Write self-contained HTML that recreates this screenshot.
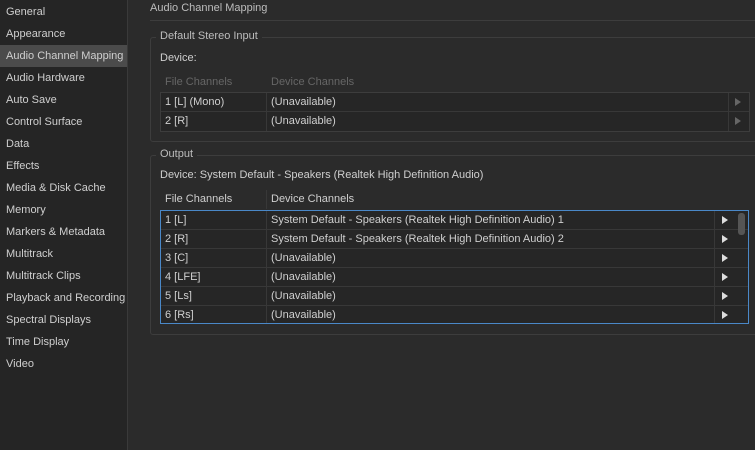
<!DOCTYPE html><html><head><style>
body{margin:0;width:755px;height:450px;background:#2b2b2b;font-family:"Liberation Sans",sans-serif;font-size:11px;color:#cfcfcf;position:relative;overflow:hidden}
.sb{position:absolute;left:0;top:0;width:128px;height:450px;background:#252525;border-right:1px solid #3a3a3a;padding-top:1px;box-sizing:border-box}
.sb div{height:22px;line-height:22px;padding-left:6px}
.sb .sel{background:#4b4b4b}
.a{position:absolute;white-space:nowrap}
.box{position:absolute;border:1px solid #3d3d3d;border-radius:3px}
.lg{position:absolute;background:#2b2b2b;padding:0 4px;color:#bdbdbd}
.tbl{position:absolute;background:#262626}
.row{position:absolute;left:0;right:0;height:18px;line-height:18px;border-bottom:1px solid #383838}
.row span{position:absolute}
.arr{position:absolute;width:0;height:0;border-left:6px solid #ddd;border-top:4px solid transparent;border-bottom:4px solid transparent}
</style></head><body>
<div class="sb">
<div>General</div><div>Appearance</div><div class="sel">Audio Channel Mapping</div><div>Audio Hardware</div><div>Auto Save</div><div>Control Surface</div><div>Data</div><div>Effects</div><div>Media &amp; Disk Cache</div><div>Memory</div><div>Markers &amp; Metadata</div><div>Multitrack</div><div>Multitrack Clips</div><div>Playback and Recording</div><div>Spectral Displays</div><div>Time Display</div><div>Video</div>
</div>
<div class="a" style="left:150px;top:2px;color:#bdbdbd">Audio Channel Mapping</div>
<div style="position:absolute;left:150px;right:0;top:20px;height:1px;background:#3d3d3d"></div>
<div class="box" style="left:150px;top:37px;width:620px;height:103px"></div>
<div class="lg" style="left:156px;top:30px">Default Stereo Input</div>
<div class="a" style="left:160px;top:52px">Device:</div>
<div class="a" style="left:165px;top:76px;color:#666">File Channels</div>
<div class="a" style="left:271px;top:76px;color:#666">Device Channels</div>
<div class="tbl" style="left:160px;top:92px;width:588px;height:38px;border:1px solid #3d3d3d">
<div class="row" style="top:0"><span style="left:4px">1 [L] (Mono)</span><span style="left:110px">(Unavailable)</span></div>
<div class="row" style="top:19px;border:0"><span style="left:4px">2 [R]</span><span style="left:110px">(Unavailable)</span></div>
<div style="position:absolute;left:105px;top:0;bottom:0;width:1px;background:#383838"></div>
<div style="position:absolute;left:567px;top:0;bottom:0;width:1px;background:#383838"></div>
<div class="arr" style="left:574px;top:5px;border-left-color:#666"></div>
<div class="arr" style="left:574px;top:24px;border-left-color:#666"></div>
</div>
<div class="box" style="left:150px;top:155px;width:620px;height:178px"></div>
<div class="lg" style="left:156px;top:148px">Output</div>
<div class="a" style="left:160px;top:169px">Device: System Default - Speakers (Realtek High Definition Audio)</div>
<div class="a" style="left:165px;top:193px">File Channels</div>
<div class="a" style="left:271px;top:193px">Device Channels</div>
<div style="position:absolute;left:266px;top:190px;width:1px;height:19px;background:#383838"></div>
<div class="tbl" style="left:160px;top:210px;width:587px;height:112px;border:1px solid #4a88c8">
<div class="row" style="top:0"><span style="left:4px">1 [L]</span><span style="left:110px">System Default - Speakers (Realtek High Definition Audio) 1</span></div>
<div class="row" style="top:19px"><span style="left:4px">2 [R]</span><span style="left:110px">System Default - Speakers (Realtek High Definition Audio) 2</span></div>
<div class="row" style="top:38px"><span style="left:4px">3 [C]</span><span style="left:110px">(Unavailable)</span></div>
<div class="row" style="top:57px"><span style="left:4px">4 [LFE]</span><span style="left:110px">(Unavailable)</span></div>
<div class="row" style="top:76px"><span style="left:4px">5 [Ls]</span><span style="left:110px">(Unavailable)</span></div>
<div class="row" style="top:95px;border:0"><span style="left:4px">6 [Rs]</span><span style="left:110px">(Unavailable)</span></div>
<div style="position:absolute;left:105px;top:0;bottom:0;width:1px;background:#383838"></div>
<div style="position:absolute;left:553px;top:0;bottom:0;width:1px;background:#383838"></div>
<div class="arr" style="left:561px;top:5px"></div><div class="arr" style="left:561px;top:24px"></div><div class="arr" style="left:561px;top:43px"></div><div class="arr" style="left:561px;top:62px"></div><div class="arr" style="left:561px;top:81px"></div><div class="arr" style="left:561px;top:100px"></div>
<div style="position:absolute;left:577px;top:2px;width:7px;height:22px;border-radius:3px;background:#555"></div>
</div>
</body></html>
